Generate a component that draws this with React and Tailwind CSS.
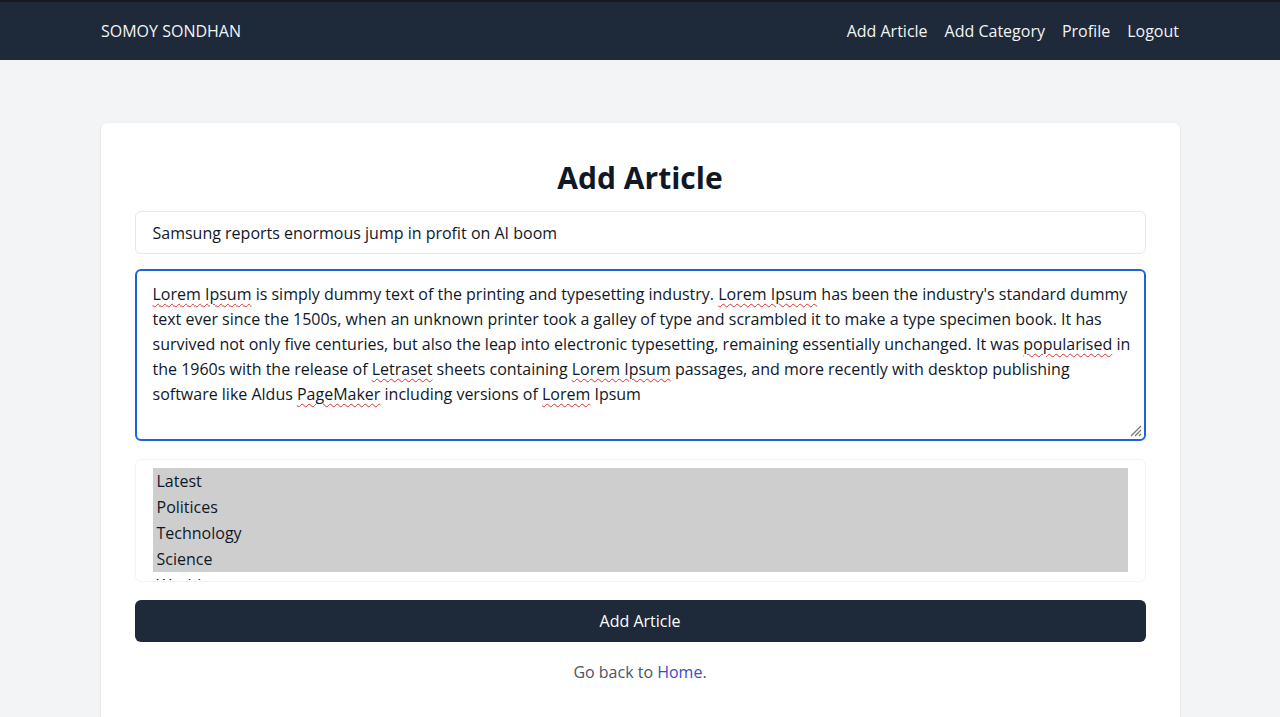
const lines = [
  [["Lorem Ipsum", true], [" is simply dummy text of the printing and typesetting industry. "], ["Lorem Ipsum", true], [" has been the industry's standard dummy"]],
  [["text ever since the 1500s, when an unknown printer took a galley of type and scrambled it to make a type specimen book. It has"]],
  [["survived not only five centuries, but also the leap into electronic typesetting, remaining essentially unchanged. It was "], ["popularised", true], [" in"]],
  [["the 1960s with the release of "], ["Letraset", true], [" sheets containing "], ["Lorem Ipsum", true], [" passages, and more recently with desktop publishing"]],
  [["software like Aldus "], ["PageMaker", true], [" including versions of "], ["Lorem", true], [" Ipsum"]],
];

const categories = ["Latest", "Politices", "Technology", "Science"];

const Squiggle = ({ children }) => (
  <span className="underline decoration-wavy decoration-[#e03131] decoration-1 underline-offset-[3px]">{children}</span>
);

export default function App() {
  return (
    <div className="min-h-screen bg-gray-100 font-['Open_Sans',sans-serif] text-gray-900">
      <nav className="h-[60px] border-t-2 border-[#16191f] bg-gray-800">
        <div className="mx-auto flex h-full w-[1078px] items-center justify-between">
          <span className="text-[16px] text-gray-100">SOMOY SONDHAN</span>
          <div className="flex gap-[17px] text-[16px] text-gray-100">
            <a href="#">Add Article</a>
            <a href="#">Add Category</a>
            <a href="#">Profile</a>
            <a href="#">Logout</a>
          </div>
        </div>
      </nav>

      <main className="pt-[63px]">
        <div className="mx-auto w-[1079px] rounded-md bg-white px-[34px] pb-10 pt-[35px] shadow-sm">
          <h1 className="mb-[13px] text-center text-[30px] font-bold leading-[40px]">Add Article</h1>

          <div className="flex h-[43px] items-center rounded-md border border-gray-200 px-[17px] text-[16px]">
            Samsung reports enormous jump in profit on AI boom
          </div>

          <div className="relative mt-[15px] h-[172px] rounded-md border-2 border-[#1a66d9] px-[16px] pt-[11px] text-[16px] leading-[25px]">
            {lines.map((line, i) => (
              <div key={i} className="whitespace-nowrap">
                {line.map(([t, bad], j) => (bad ? <Squiggle key={j}>{t}</Squiggle> : <span key={j}>{t}</span>))}
              </div>
            ))}
            <svg className="absolute bottom-[2px] right-[2px]" width="14" height="14" viewBox="0 0 14 14">
              <path d="M13 3 L3 13 M13 7 L7 13 M13 11 L11 13" stroke="#777" strokeWidth="1.2" />
            </svg>
          </div>

          <div className="mt-[18px] h-[123px] overflow-hidden rounded-md border border-gray-100 px-[17px] pt-[8px]">
            <div className="bg-[#cecece]">
              {categories.map((c) => (
                <div key={c} className="h-[26px] px-[4px] text-[16px] leading-[26px]">{c}</div>
              ))}
            </div>
            <div className="h-[8px] overflow-hidden px-[4px] text-[16px] leading-[26px]">World</div>
          </div>

          <button className="mt-[18px] h-[42px] w-full rounded-md bg-gray-800 text-[16px] text-white">
            Add Article
          </button>

          <p className="mt-[18px] text-center text-[16px] text-gray-600">
            Go back to <a href="#" className="text-[#3b4dc8]">Home</a>.
          </p>
        </div>
      </main>
    </div>
  );
}
